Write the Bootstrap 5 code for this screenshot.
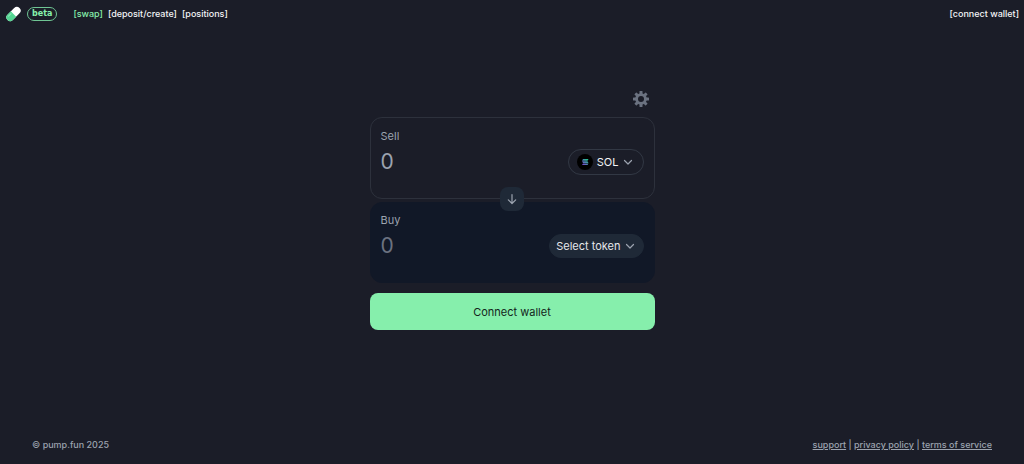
<!DOCTYPE html>
<html lang="en" data-bs-theme="dark">
<head>
<meta charset="utf-8">
<meta name="viewport" content="width=device-width, initial-scale=1">
<title>Swap</title>
<link href="https://cdn.jsdelivr.net/npm/bootstrap@5.3.0/dist/css/bootstrap.min.css" rel="stylesheet">
<style>
  body { background: #1b1d28; font-family: Inter, "Liberation Sans", sans-serif; font-size: 11px; line-height: 16px; color: #9ca3af; }
  .topbar { height: 28px; padding: 0 5px; }
  .topbar a, .wallet-link { color: #f3f4f6; text-decoration: none; font-size: 9px; font-weight: 500; line-height: 16px; }
  .topbar a.active { color: #86efac; }
  .menu { gap: 5px; }
  .home { margin-right: 5px; }
  .beta-tag { border: 1px solid #6fc594; border-radius: 8px; color: #86efac; font: bold 8px/12px "DejaVu Sans", sans-serif; padding: 0 4px; }
  .swap { width: 100%; max-width: 285px; padding-top: 63px; }
  .icon-btn { width: 16px; height: 16px; color: #6b7280; margin-right: 6px; }
  .settings-row { margin-bottom: 10px; }
  .panel { height: 82px; border: 1px solid #2d313c; border-radius: 12px; padding: 10px; }
  .panel-buy { height: 81px; background: #111827; border-color: #111827; padding-top: 9px; }
  .amount { width: 120px; height: 28px; font-size: 21px; line-height: 28px; color: #9ca3af; }
  .amount::placeholder { color: #9ca3af; opacity: 1; }
  .panel-buy .amount::placeholder { color: #6b7280; }
  .token { height: 26px; border: 1px solid #323844; border-radius: 13px; padding: 0 10px 0 8px; color: #f3f4f6; font-size: 11px; line-height: 16px; }
  .token-empty { height: 24px; background: #1f2937; border-color: #1f2937; padding: 0 8px 0 6px; color: #e5e7eb; }
  .token svg:last-child { color: #9ca3af; }
  .flip-row { height: 3px; }
  .flip { width: 24px; height: 24px; border-radius: 8px; background: #1f2937; color: #9ca3af; }
  .flip:hover { background: #1f2937; }
  .connect { height: 37px; margin-top: 10px; border-radius: 8px; background: #86efac; color: #14251c; font-size: 11px; line-height: 16px; }
  .connect:hover { background: #6ee79a; color: #14251c; }
  .foot { padding: 0 32px 11px; font-size: 9px; font-weight: 500; }
  .foot a { color: #9ca3af; }
</style>
</head>
<body class="d-flex flex-column min-vh-100">
<header class="topbar d-flex align-items-center justify-content-between">
  <div class="d-flex align-items-center">
    <a href="#" class="home d-flex" aria-label="Home">
      <svg width="17" height="17" viewBox="0 0 17 17"><g transform="rotate(-45 8.5 8)"><rect x="0" y="4.200" width="17" height="7.600" rx="3.800" fill="#fff"/><path d="M8.500 4.200H3.800a3.800 3.800 0 0 0 0 7.600h4.700z" fill="#54d592"/><path d="M3.500 6h3.500" stroke="#8be8b8" stroke-width="1" stroke-linecap="round"/></g></svg>
    </a>
    <span class="beta-tag me-3">beta</span>
    <nav class="menu d-flex">
      <a href="#" class="active">[swap]</a>
      <a href="#">[deposit/create]</a>
      <a href="#">[positions]</a>
    </nav>
  </div>
  <button type="button" class="wallet-link btn border-0 p-0">[connect wallet]</button>
</header>

<main class="flex-grow-1">
  <div class="swap mx-auto">
    <div class="settings-row d-flex justify-content-end">
      <button type="button" class="icon-btn btn border-0 p-0 d-flex" aria-label="Settings">
        <svg width="16" height="16" viewBox="0 0 16 16"><g fill="currentColor"><rect x="6.500" y="0" width="3" height="16" rx=".6"/><rect x="6.500" y="0" width="3" height="16" rx=".6" transform="rotate(45 8 8)"/><rect x="6.500" y="0" width="3" height="16" rx=".6" transform="rotate(90 8 8)"/><rect x="6.500" y="0" width="3" height="16" rx=".6" transform="rotate(135 8 8)"/><circle cx="8" cy="8" r="5.800"/></g><circle cx="8" cy="8" r="3" fill="#1b1d28"/></svg>
      </button>
    </div>

    <section class="panel">
      <label for="sell">Sell</label>
      <div class="d-flex align-items-center justify-content-between mt-1">
        <input id="sell" class="amount border-0 bg-transparent p-0" placeholder="0" inputmode="decimal">
        <button type="button" class="token btn d-flex align-items-center">
          <svg class="me-1" width="16" height="16" viewBox="0 0 16 16"><defs><linearGradient id="sol" x1="0" y1="1" x2="1" y2="0"><stop offset="0" stop-color="#9945ff"/><stop offset="1" stop-color="#19fb9b"/></linearGradient></defs><circle cx="8" cy="8" r="8" fill="#000"/><path d="M6 5h5.500l-1 1.700H5zM5 7.200h5.500l1 1.700H6zM6 9.400h5.500l-1 1.700H5z" fill="url(#sol)" opacity=".85"/></svg>
          SOL
          <svg class="ms-1" width="10" height="10" viewBox="0 0 10 10" fill="none" stroke="currentColor" stroke-width="1.200" stroke-linecap="round" stroke-linejoin="round"><path d="M1.500 3.500 5 7l3.500-3.500"/></svg>
        </button>
      </div>
    </section>

    <div class="flip-row position-relative">
      <button type="button" class="flip btn border-0 p-0 d-flex align-items-center justify-content-center position-absolute top-0 start-50 translate-middle" aria-label="Switch tokens">
        <svg width="12" height="12" viewBox="0 0 12 12" fill="none" stroke="currentColor" stroke-width="1.200" stroke-linecap="round" stroke-linejoin="round"><path d="M6 1.500v9M2.300 6.800 6 10.500l3.700-3.700"/></svg>
      </button>
    </div>

    <section class="panel panel-buy">
      <label for="buy">Buy</label>
      <div class="d-flex align-items-center justify-content-between mt-1">
        <input id="buy" class="amount border-0 bg-transparent p-0" placeholder="0" inputmode="decimal">
        <button type="button" class="token token-empty btn d-flex align-items-center">
          Select token
          <svg class="ms-1" width="10" height="10" viewBox="0 0 10 10" fill="none" stroke="currentColor" stroke-width="1.200" stroke-linecap="round" stroke-linejoin="round"><path d="M1.500 3.500 5 7l3.500-3.500"/></svg>
        </button>
      </div>
    </section>

    <button type="button" class="connect btn border-0 w-100 p-0">Connect wallet</button>
  </div>
</main>

<footer class="foot d-flex justify-content-between">
  <span>© pump.fun 2025</span>
  <nav><a href="#">support</a> | <a href="#">privacy policy</a> | <a href="#">terms of service</a></nav>
</footer>
<script src="https://cdn.jsdelivr.net/npm/bootstrap@5.3.0/dist/js/bootstrap.bundle.min.js"></script>
</body>
</html>
